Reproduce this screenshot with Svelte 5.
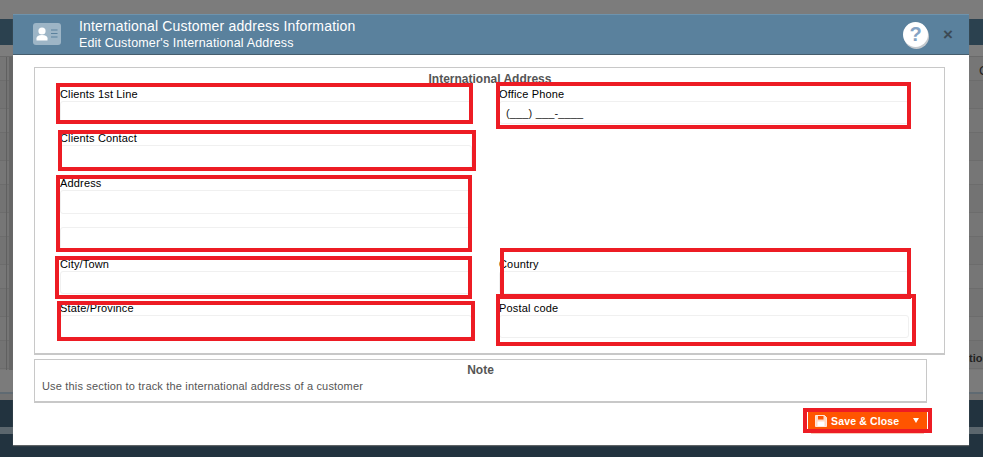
<script>
  const boxes = [
    { x: 56, y: 83, w: 417, h: 41 },
    { x: 58, y: 130, w: 418, h: 41 },
    { x: 56, y: 175, w: 416, h: 77 },
    { x: 55, y: 256, w: 417, h: 43 },
    { x: 57, y: 301, w: 418, h: 40 },
    { x: 496, y: 82, w: 415, h: 47 },
    { x: 500, y: 248, w: 411, h: 51 },
    { x: 496, y: 294, w: 420, h: 52 },
    { x: 803, y: 408, w: 129, h: 25 }
  ];
</script>

<div class="page">
  <div class="backdrop">
    <div class="top"></div>
    <div class="band"></div>
    <div class="rows">
      <div class="r-head"></div>
      <div class="r-body"></div>
      <div class="r-tail"></div>
      <span class="c">C</span><span class="tion">tion</span>
    </div>
    <div class="foot"><div class="strip"></div></div>
  </div>

  <section class="modal">
    <header class="head">
      <svg class="card" viewBox="0 0 28 22" width="28" height="22" aria-hidden="true">
        <rect width="28" height="22" rx="3" fill="#9db5c6" />
        <circle cx="9" cy="8" r="3.6" fill="#fff" />
        <path d="M3.5 17.5v-2.2c0-2 1.8-3.3 5.5-3.3s5.5 1.300 5.500 3.300v2.200z" fill="#fff" />
        <path d="M18 7h6.500M18 10.500h6.500M18 14h6.500" stroke="#5a819d" stroke-width="1.200" />
      </svg>
      <div class="titles">
        <div class="t1">International Customer address Information</div>
        <div class="t2">Edit Customer's International Address</div>
      </div>
      <div class="help">?</div>
      <div class="close">×</div>
    </header>

    <div class="body">
      <fieldset class="addr">
        <div class="legend">International Address</div>
        <div class="grid">
          <div class="f r1 l"><label for="a">Clients 1st Line</label><input id="a" /></div>
          <div class="f r1 rr"><label for="b">Office Phone</label><input id="b" value="(___) ___-____" /></div>
          <div class="f r2 l"><label for="c">Clients Contact</label><input id="c" /></div>
          <div class="f r3 l">
            <label for="d">Address</label><input id="d" class="tall" /><input class="tall second" aria-label="Address 2" />
          </div>
          <div class="f r4 l"><label for="e">City/Town</label><input id="e" /></div>
          <div class="f r4 rr"><label for="f">Country</label><input id="f" /></div>
          <div class="f r5 l"><label for="g">State/Province</label><input id="g" /></div>
          <div class="f r5 rr"><label for="h">Postal code</label><input id="h" /></div>
        </div>
      </fieldset>

      <div class="note">
        <div class="legend">Note</div>
        <p>Use this section to track the international address of a customer</p>
      </div>

      <div class="actions">
        <button class="save">
          <svg viewBox="0 0 12 12" width="12" height="12" aria-hidden="true">
            <path d="M.5.5h9l2 2v9H.5z" fill="#ffd9c4" stroke="#ffe6d8" />
            <rect x="3" y="1" width="5.500" height="3.500" fill="#ff5500" />
            <rect x="2.500" y="6.500" width="7" height="4.500" fill="#fff" />
          </svg>
          <span>Save &amp; Close</span>
          <i class="caret"></i>
        </button>
      </div>
    </div>
  </section>

  {#each boxes as b}
    <div class="red" style="left:{b.x}px;top:{b.y}px;width:{b.w}px;height:{b.h}px"></div>
  {/each}
</div>

<style>
  :global(body) { margin: 0; }
  .page {
    position: relative;
    width: 983px;
    height: 457px;
    overflow: hidden;
    font-family: "Liberation Sans", Arial, sans-serif;
    background: #6f6f6f;
  }
  .backdrop { position: absolute; inset: 0; display: flex; flex-direction: column; }
  .top { height: 19px; background: #7c7c7c; }
  .band { height: 26px; background: #2b414f; }
  .rows {
    height: 355px;
    position: relative;
    display: flex;
    flex-direction: column;
  }
  .r-head { height: 12px; background: #7d7d7d; border-bottom: 1px solid #6a6a6a; box-sizing: border-box; }
  .r-body {
    flex: 1;
    background:
      linear-gradient(90deg, transparent 6px, #606060 6px, #606060 7px, transparent 7px, transparent 9px, #666 9px, #666 13px, transparent 13px),
      repeating-linear-gradient(180deg, #767676 0, #767676 23px, #6c6c6c 23px, #6c6c6c 24px, #737373 24px, #737373 51px, #6c6c6c 51px, #6c6c6c 52px);
  }
  .r-tail {
    height: 30px;
    box-sizing: border-box;
    background: #7b7b7b;
    border-bottom: 7px solid #727272;
    position: relative;
  }
  .r-tail::after {
    content: "";
    position: absolute;
    left: 0;
    right: 0;
    bottom: -1px;
    height: 2px;
    background: #5f6a72;
  }
  .c { position: absolute; left: 979px; top: 18px; font-size: 13px; line-height: 15px; color: #222; }
  .tion { position: absolute; left: 969px; top: 306px; font-size: 11px; font-weight: bold; line-height: 14px; color: #222; }
  .foot { flex: 1; background: #22333f; position: relative; padding-top: 27px; }
  .strip { height: 7px; background: #5b666d; }

  .modal {
    position: absolute;
    left: 13px;
    top: 14px;
    width: 956px;
    height: 431px;
    background: #fff;
    display: flex;
    flex-direction: column;
    box-shadow: 0 1px 1px rgba(120, 120, 120, .7);
  }
  .head {
    height: 41px;
    box-sizing: border-box;
    background: #5a819d;
    border-top: 1px solid #6e93ad;
    border-bottom: 1px solid #465d6d;
    display: flex;
    align-items: center;
    color: #fff;
    padding: 0 0 0 20px;
  }
  .card { flex: none; margin-top: -1px; }
  .titles { margin-left: 18px; flex: 1; }
  .t1 { font-size: 14px; line-height: 17px; letter-spacing: .17px; }
  .t2 { font-size: 12.500px; line-height: 16px; letter-spacing: .16px; }
  .help {
    width: 25px;
    height: 25px;
    border-radius: 50%;
    background: #fff;
    color: #84a3c4;
    font: bold 20px/25px "Liberation Sans", sans-serif;
    text-align: center;
    box-shadow: 1px 2px 0 #c4c9ce;
    margin-right: 15px;
  }
  .close {
    width: 10px;
    font-size: 17px;
    font-weight: bold;
    line-height: 17px;
    color: #3c4a55;
    margin-right: 16px;
  }

  .body { flex: 1; padding: 12px 24px 0 21px; }
  .addr {
    margin: 0;
    padding: 0 24px 0 25px;
    width: 911px;
    height: 288px;
    box-sizing: border-box;
    border: 1px solid #c8c8c8;
    border-bottom-width: 2px;
    min-inline-size: 0;
  }
  .legend {
    font-size: 12px;
    font-weight: bold;
    color: #555;
    text-align: center;
    line-height: 14px;
    padding-top: 3px;
  }
  .addr .legend { height: 2px; padding-top: 4px; margin-bottom: 13px; }
  .grid {
    display: grid;
    grid-template-columns: 412px 410px;
    column-gap: 27px;
    grid-template-rows: 44px 45px 81px 44px 44px;
  }
  .r1 { grid-row: 1; }
  .r2 { grid-row: 2; }
  .r3 { grid-row: 3; }
  .r4 { grid-row: 4; }
  .r5 { grid-row: 5; }
  .l { grid-column: 1; }
  .rr { grid-column: 2; }
  label {
    display: block;
    font-size: 11px;
    letter-spacing: .16px;
    line-height: 14px;
    color: #000;
    height: 14px;
  }
  input {
    display: block;
    box-sizing: border-box;
    width: 100%;
    height: 23px;
    padding: 0 6px;
    border: 1px solid #f0f0f0;
    border-radius: 3px;
    background: #fff;
    font: 11px "Liberation Sans", Arial, sans-serif;
    letter-spacing: .15px;
    color: #222;
    outline: none;
  }
  .tall { height: 24px; }
  .second { margin-top: 13px; }

  .note {
    width: 893px;
    height: 44px;
    box-sizing: border-box;
    margin-top: 4px;
    border: 1px solid #c8c8c8;
    border-bottom-width: 2px;
    padding: 0 7px;
  }
  .note p {
    margin: 2px 0 0;
    font-size: 11px;
    letter-spacing: .17px;
    line-height: 14px;
    color: #555;
  }
  .actions { display: flex; justify-content: flex-end; padding: 9px 17px 0 0; }
  .save {
    position: relative;
    width: 121px;
    height: 17px;
    box-sizing: border-box;
    border: 0;
    border-left: 1px solid #fff;
    border-right: 1px solid #fff;
    background: #ff5500;
    color: #fff;
    font: bold 10.500px "Liberation Sans", Arial, sans-serif;
    letter-spacing: .15px;
    display: flex;
    align-items: center;
    padding: 0 0 0 7px;
    gap: 4px;
  }
  .save::after {
    content: "";
    position: absolute;
    left: 3px;
    right: 3px;
    top: 21px;
    height: 1px;
    background: #fbc9b4;
  }
  .save span { flex: 1; text-align: left; }
  .caret {
    width: 0;
    height: 0;
    border-left: 3.500px solid transparent;
    border-right: 3.500px solid transparent;
    border-top: 5px solid #fff;
    margin-right: 8px;
  }
  .red {
    position: absolute;
    box-sizing: border-box;
    border: 4px solid #ed1c24;
    pointer-events: none;
  }
</style>
